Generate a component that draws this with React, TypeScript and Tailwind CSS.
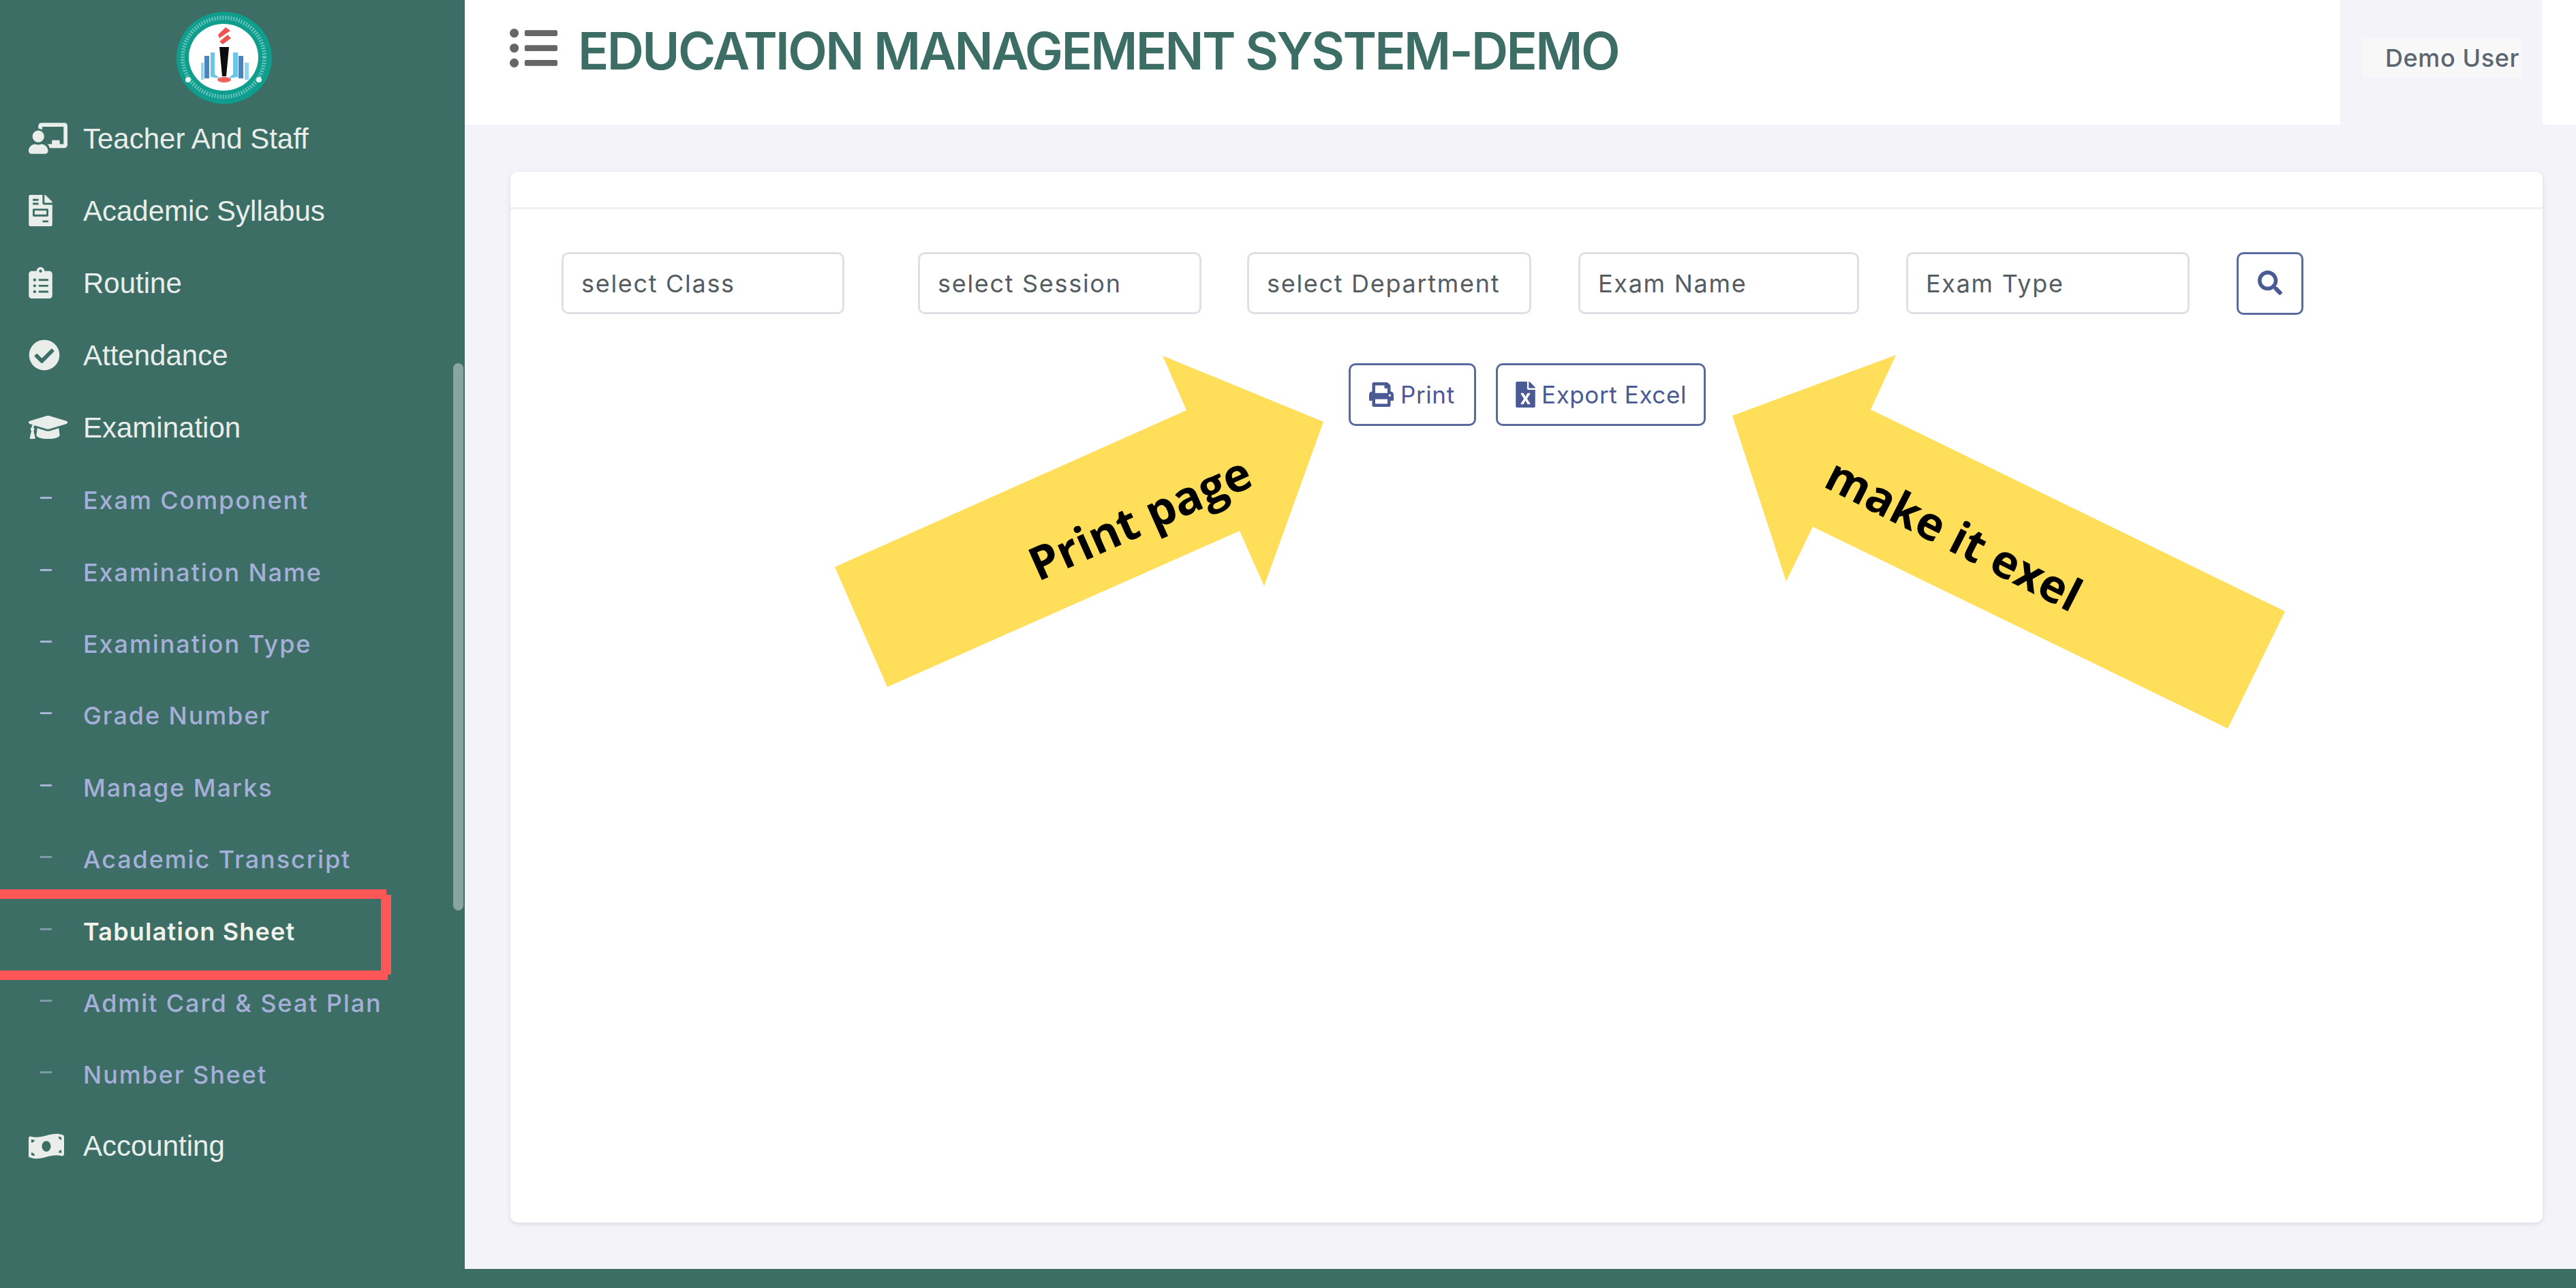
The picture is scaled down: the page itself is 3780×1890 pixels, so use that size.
import React from "react";
import {
  FaChalkboardTeacher,
  FaCheckCircle,
  FaClipboardList,
  FaFileExcel,
  FaFileInvoice,
  FaGraduationCap,
  FaListUl,
  FaMoneyBillWave,
  FaPrint,
  FaSearch,
} from "react-icons/fa";

const mainItems = [
  { label: "Teacher And Staff", icon: <FaChalkboardTeacher className="w-[57px] h-[46px]" /> },
  { label: "Academic Syllabus", icon: <FaFileInvoice className="w-[35px] h-[46px]" /> },
  { label: "Routine", icon: <FaClipboardList className="w-[35px] h-[46px]" /> },
  { label: "Attendance", icon: <FaCheckCircle className="w-[46px] h-[46px]" /> },
  { label: "Examination", icon: <FaGraduationCap className="w-[57px] h-[46px]" /> },
];

const subItems = [
  { label: "Exam Component", dash: "bg-[#a9b4d9]" },
  { label: "Examination Name", dash: "bg-[#a9b4d9]" },
  { label: "Examination Type", dash: "bg-[#a9b4d9]" },
  { label: "Grade Number", dash: "bg-[#a9b4d9]" },
  { label: "Manage Marks", dash: "bg-[#a9b4d9]" },
  { label: "Academic Transcript", dash: "bg-[#7f9aa8]" },
  { label: "Tabulation Sheet", dash: "bg-[#7f9aa8]", active: true },
  { label: "Admit Card & Seat Plan", dash: "bg-[#7f9aa8]" },
  { label: "Number Sheet", dash: "bg-[#7f9aa8]" },
];

const Logo = () => (
  <svg width="140" height="136" viewBox="0 0 140 136">
    <ellipse cx="70" cy="68" rx="70" ry="67.5" fill="#0f9e8e" />
    <ellipse
      cx="69"
      cy="67"
      rx="60"
      ry="58"
      fill="none"
      stroke="#d8f1ed"
      strokeWidth="6"
      strokeDasharray="2 2"
      opacity="0.45"
    />
    <circle cx="17" cy="100" r="4" fill="#e6f6f3" />
    <circle cx="121" cy="100" r="4" fill="#e6f6f3" />
    <ellipse cx="69" cy="67" rx="51" ry="49" fill="#fff" />
    <path d="M72 23 L79 28 L63 39 L61 34 Z M75 34 L80 39 L68 48 L63 44 Z" fill="#ef5350" />
    <path d="M63 52 H77 L73 95 H67 Z" fill="#0c0c0c" />
    <ellipse cx="70" cy="100" rx="10" ry="4" fill="#f0605e" />
    <path d="M36 75 H40 V100 H36 Z M100 75 H106 V100 H100 Z" fill="#8fd6ee" />
    <path d="M41 65 H48 V98 H41 Z M91 65 H98 V98 H91 Z" fill="#4f82bd" />
    <path d="M50 60 H56 V92 L64 98 L50 96 Z M83 60 H90 V96 L76 98 L83 92 Z" fill="#6cc5e6" />
  </svg>
);

const Sidebar = () => (
  <aside className="relative w-[682px] h-full shrink-0 bg-[#3c6e66] font-['Liberation_Sans',sans-serif]">
    <div className="flex justify-center h-[150px] pt-[17px] pr-[24px]">
      <Logo />
    </div>
    {mainItems.map((item) => (
      <div key={item.label} className="flex items-center h-[106px] pl-[42px] text-[#e9eeeb]">
        <span className="w-[80px] flex">{item.icon}</span>
        <span className="text-[42px]">{item.label}</span>
      </div>
    ))}
    {subItems.map((item) => (
      <div key={item.label} className="flex items-center h-[105.4px] pl-[59px]">
        <span className={`w-[17px] h-[3px] -mt-[4px] ${item.dash}`} />
        <span
          className={`ml-[46px] pt-[3px] font-['Inter',sans-serif] font-medium text-[36px] whitespace-nowrap ${
            item.active ? "text-[#f1f3ea] font-semibold tracking-[1.2px]" : "text-[#a5afd8] tracking-[1.9px]"
          }`}
        >
          {item.label}
        </span>
      </div>
    ))}
    <div className="flex items-center h-[106px] pl-[42px] text-[#e9eeeb]">
      <span className="w-[80px] flex">
        <FaMoneyBillWave className="w-[52px] h-[42px]" />
      </span>
      <span className="text-[42px]">Accounting</span>
    </div>

    {/* scrollbar */}
    <div className="absolute left-[665px] top-[533px] w-[15px] h-[803px] rounded-full bg-[#8aa59f]" />

    {/* red highlight box round Tabulation Sheet */}
    <div className="absolute left-0 top-[1305px] w-[567px] h-[14px] bg-[#ff5757]" />
    <div className="absolute left-0 top-[1424px] w-[569px] h-[14px] bg-[#ff5757]" />
    <div className="absolute left-[559px] top-[1313px] w-[15px] h-[117px] bg-[#ff5757]" />
  </aside>
);

const Header = () => (
  <header className="flex h-[183px] bg-white">
    <div className="flex w-[2752px] pl-[66px] pt-[35px] items-start">
      <FaListUl className="w-[70px] h-[71px] text-[#666666]" />
      <h1 className="ml-[30px] -mt-[2px] font-['Inter',sans-serif] font-semibold text-[75px] leading-[84px] tracking-[-2.6px] text-[#3c6e66] whitespace-nowrap">
        EDUCATION MANAGEMENT SYSTEM-DEMO
      </h1>
    </div>
    <div className="w-[297px] bg-[#f3f3f9] pl-[32px] pt-[57px]">
      <div className="w-[234px] h-[56px] bg-[#f8f8f9] pl-[34px] flex items-center overflow-hidden font-['Inter',sans-serif] font-medium text-[36px] tracking-[0.6px] text-[#5b6670] whitespace-nowrap">
        Demo User
      </div>
    </div>
    <div className="flex-1" />
  </header>
);

const Filter = ({ label, className }: { label: string; className: string }) => (
  <div
    className={`h-[91px] flex items-center pl-[26px] bg-white border-[3px] border-[#dde1e6] rounded-[10px] font-['Inter',sans-serif] text-[36px] tracking-[1.7px] text-[#555d62] whitespace-nowrap ${className}`}
  >
    {label}
  </div>
);

const Arrows = () => (
  <>
    <svg className="absolute left-0 top-0" width="3780" height="1890" viewBox="0 0 3780 1890">
      <polygon
        points="1225,832 1741,602 1706,522 1942,619 1855,860 1819,779 1302,1008"
        fill="#ffde59"
      />
      <polygon
        points="2745,601 3353,897 3269,1069 2660,773 2621,853 2542,610 2782,521"
        fill="#ffde59"
      />
    </svg>
    <div className="absolute left-[1472px] top-[709px] w-[400px] text-center rotate-[-24deg] font-['Open_Sans',sans-serif] font-bold text-[68px] leading-[100px] text-black">
      Print page
    </div>
    <div className="absolute left-[2618px] top-[733px] w-[500px] text-center rotate-[27deg] font-['Open_Sans',sans-serif] font-bold text-[67px] leading-[100px] text-black">
      make it exel
    </div>
  </>
);

const App: React.FC = () => {
  return (
    <div className="relative w-[3780px] h-[1890px] flex flex-col overflow-hidden bg-[#f3f3f9]">
      <div className="flex h-[1862px]">
        <Sidebar />
        <main className="flex-1">
          <Header />
          <div className="pl-[67px] pt-[69px]">
            <div className="w-[2982px] h-[1542px] bg-white rounded-[10px] shadow-[0_2px_6px_rgba(60,60,90,0.14)]">
              <div className="h-[55px] border-b-[3px] border-[#eef0f2]" />
              <div className="flex pl-[75px] pt-[63px]">
                <Filter label="select Class" className="w-[415px] mr-[108px]" />
                <Filter label="select Session" className="w-[416px] mr-[67px]" />
                <Filter label="select Department" className="w-[417px] mr-[69px]" />
                <Filter label="Exam Name" className="w-[412px] mr-[69px]" />
                <Filter label="Exam Type" className="w-[416px] mr-[69px]" />
                <button className="w-[98px] h-[92px] flex items-center justify-center bg-white border-[3px] border-[#5a6a9f] rounded-[10px] text-[#4a5a94]">
                  <FaSearch className="w-[36px] h-[36px] -mt-[2px]" />
                </button>
              </div>
              <div className="flex pl-[1230px] pt-[71px] font-['Inter',sans-serif] text-[35px] tracking-[0.6px] text-[#4a5a94]">
                <button className="w-[187px] h-[92px] flex items-center pl-[27px] bg-white border-[3px] border-[#5a6a9f] rounded-[10px]">
                  <FaPrint className="w-[36px] h-[36px]" />
                  <span className="ml-[10px]">Print</span>
                </button>
                <button className="ml-[29px] w-[308px] h-[92px] flex items-center pl-[26px] bg-white border-[3px] border-[#5a6a9f] rounded-[10px]">
                  <FaFileExcel className="w-[29px] h-[38px]" />
                  <span className="ml-[9px] whitespace-nowrap">Export Excel</span>
                </button>
              </div>
            </div>
          </div>
        </main>
      </div>
      <footer className="h-[28px] bg-[#3c6e66]" />
      <Arrows />
    </div>
  );
};

export default App;
